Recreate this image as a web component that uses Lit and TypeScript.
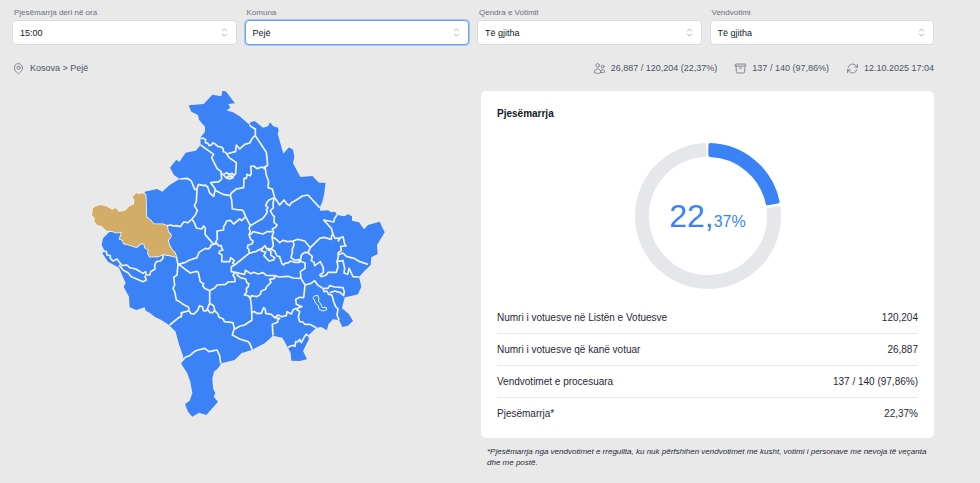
import { LitElement, html, css, svg } from "lit";
import { customElement, property } from "lit/decorators.js";

const ICONS: Record<string, string[]> = {
  pin: [
    "M15 10.5a3 3 0 11-6 0 3 3 0 016 0z",
    "M19.5 10.5c0 7.142-7.5 11.25-7.5 11.25S4.5 17.642 4.5 10.5a7.5 7.5 0 1115 0z",
  ],
  users: [
    "M15 19.128a9.38 9.38 0 002.625.372 9.337 9.337 0 004.121-.952 4.125 4.125 0 00-7.533-2.493M15 19.128v-.003c0-1.113-.285-2.16-.786-3.07M15 19.128v.106A12.318 12.318 0 018.624 21c-2.331 0-4.512-.645-6.374-1.766l-.001-.109a6.375 6.375 0 0111.964-3.07M12 6.375a3.375 3.375 0 11-6.75 0 3.375 3.375 0 016.75 0zm8.25 2.25a2.625 2.625 0 11-5.25 0 2.625 2.625 0 015.25 0z",
  ],
  archive: [
    "M20.25 7.5l-.625 10.632a2.25 2.25 0 01-2.247 2.118H6.622a2.25 2.25 0 01-2.247-2.118L3.75 7.5M10 11.25h4M3.375 7.5h17.25c.621 0 1.125-.504 1.125-1.125v-1.5c0-.621-.504-1.125-1.125-1.125H3.375c-.621 0-1.125.504-1.125 1.125v1.5c0 .621.504 1.125 1.125 1.125z",
  ],
  refresh: [
    "M16.023 9.348h4.992v-.001M2.985 19.644v-4.992m0 0h4.992m-4.993 0l3.181 3.183a8.25 8.25 0 0013.803-3.7M4.031 9.865a8.25 8.25 0 0113.803-3.7l3.181 3.182m0-4.991v4.99",
  ],
  sort: ["M8.25 15L12 18.75 15.75 15m-7.5-6L12 5.25 15.75 9"],
};

@customElement("ui-icon")
export class UiIcon extends LitElement {
  @property() name = "pin";
  static styles = css`
    :host { display: block; width: 13px; height: 13px; flex: none; }
    svg { display: block; width: 100%; height: 100%; fill: none; stroke: currentColor;
      stroke-width: 1.5; stroke-linecap: round; stroke-linejoin: round; }
  `;
  render() {
    return html`<svg viewBox="0 0 24 24" aria-hidden="true">
      ${ICONS[this.name].map((d) => svg`<path d=${d}></path>`)}
    </svg>`;
  }
}

const COUNTRY =
  "M327 61 372 57 398 29 425 34 428 18 438 19 466 55 446 57 452 68 440 76 460 82 480 94 510 120 512 112 525 108 550 128 565 124 571 112 580 123 595 128 597 138 594 146 611 206 628 187 640 194 644 215 640 235 662 276 698 273 718 293 738 293 733 330 728 350 720 368 722 377 745 376 755 382 766 380 772 390 795 394 805 388 817 394 817 407 838 412 853 433 865 420 900 410 915 442 892 480 894 507 875 517 873 540 855 557 838 576 845 605 835 628 815 633 795 637 787 670 808 688 820 708 805 722 788 726 778 705 760 703 746 718 742 736 725 726 710 728 685 752 688 762 670 798 682 823 660 828 635 827 633 805 625 788 608 758 580 752 555 775 518 794 485 805 465 825 425 835 415 850 403 860 398 880 400 910 407 925 402 935 415 950 380 990 358 983 338 995 325 980 316 957 330 947 338 925 332 890 323 865 305 837 311 815 297 775 288 740 268 720 245 705 225 695 212 685 198 677 195 667 170 675 150 667 148 635 132 605 138 595 118 548 85 530 68 505 75 498 66 480 70 460 88 442 127 435 199 400 195 320 232 312 248 320 270 300 300 282 283 270 271 248 290 224 299 231 318 203 348 197 363 180 362 158 376 140 376 125 358 104 355 90 335 80Z";

const PEJA =
  "M80 437 66 424 52 420 44 409 45 399 37 390 40 370 48 364 62 360 80 364 98 374 108 369 118 380 135 378 150 364 163 358 164 344 158 335 170 324 178 327 190 325 198 330 200 396 212 406 222 418 250 418 262 423 265 440 274 450 272 458 265 465 268 480 277 495 286 504 290 516 270 511 252 508 236 514 210 515 205 505 207 495 196 488 194 477 184 475 170 487 150 480 132 475 129 465 120 462 127 440 110 443 96 438Z";

const BORDERS = [
  "362 160 372 160 378 164 377 173 385 175 388 182 395 180 400 173 410 180 414 184 425 186 430 190 431 200 437 202 442 208 450 204 468 200 468 196 470 180 480 192 495 178 510 174 516 163 525 152",
  "510 120 515 125 527 132 527 152 560 202 564 240 556 247",
  "363 180 402 208 396 218 412 250 424 260 426 282 418 290 393 293 407 312 402 334 390 324 384 306 376 300 372 302 356 298",
  "300 282 322 280 335 288 345 313 352 313 356 298",
  "442 208 448 218 470 233 468 265 462 272 458 265 450 267 456 275 445 274 440 279 432 270 426 264",
  "440 279 450 282 460 278 462 270 M434 267 442 263 448 270",
  "352 313 350 350 344 362 353 376 347 390 337 402 325 413 312 411 302 425 290 422 280 423 275 420 262 422",
  "407 316 418 322 430 328 452 332 456 345 458 372 490 376",
  "452 332 455 324 470 312 492 308 493 280 500 280 502 268 512 272 515 264 513 244 522 243 532 251 548 246 553 250 558 243",
  "556 247 560 270 567 290 565 308 578 312 585 338 590 345 600 360 613 345 622 357 630 362 634 354 650 345 668 333 685 330 720 368",
  "490 376 498 395 512 422 550 400 563 382 560 374 565 368 558 362 562 352 568 345 583 338",
  "583 342 580 355 581 369 572 377 580 392 584 394 583 412 592 420 588 427 578 432 582 441 577 455",
  "512 422 508 430 512 438 508 450 515 446 520 440 550 447 562 440 578 440",
  "498 395 486 407 480 402 462 417 452 406 441 408 437 417 432 425 432 435 412 438 413 462 405 478",
  "337 402 345 415 350 429 366 432 372 423 377 430 376 448 402 478",
  "402 478 394 480 392 487 385 492 377 490 358 502 352 518 330 525 315 533 295 538",
  "402 478 412 475 416 482 425 482 426 490 430 495 420 498 418 505 427 510 426 530 450 530 453 518 464 527 459 534 465 540 508 505 530 499 550 488 556 482 560 490 575 492 581 482 577 455",
  "508 450 513 463 520 468 517 477 505 480 503 489 508 494 508 505",
  "550 488 545 498 558 501 553 512 568 528 582 525 585 518 574 511 573 498 560 493",
  "577 455 590 463 600 473 610 466 623 470 640 468 643 480 638 492 638 502 634 518 644 525 658 524 660 532 646 532 632 528 627 533 616 535 612 540 606 535 600 515 592 513 585 498 574 492",
  "640 468 655 463 675 468 692 488 685 503 675 502 665 510 662 528 676 534 676 550 662 560 664 580 676 600",
  "692 488 720 460 733 457 755 463 756 452 760 448 755 430 732 405 762 411 765 400 772 390",
  "760 448 766 460 778 459 776 468 782 458 790 455 795 477 799 483 783 484 785 497 775 504 776 515 772 530 775 545 770 562 745 562 740 570 725 575 720 570 731 563 731 548 722 530 705 542 703 532 695 527 698 515 685 503",
  "775 510 790 504 800 514 823 520 840 530 865 538",
  "772 530 790 527 795 550 793 564 804 568 808 550 820 575 838 576",
  "464 540 455 545 455 560 467 562 480 565 495 568 497 556 507 562 513 566 522 562 535 567 550 563 560 571 585 572 598 576 625 574 640 579 664 580",
  "467 562 460 570 466 580 466 590 446 591 437 598 412 600 406 608 390 617 375 610 369 602 372 596 362 590 356 562 350 559 332 564 313 550 300 540 295 538",
  "470 568 482 578 498 582 502 594 508 596 505 606 500 610 501 620 494 630 505 632 512 640 515 632 532 635 542 628 545 618 558 613 560 606 574 592 570 583 585 580 585 572",
  "512 640 515 660 516 682 517 705 495 720 482 723 465 732",
  "516 682 525 680 530 685 545 685 552 668 557 673 558 685 575 688 585 698 595 690 607 695 620 692 622 680 635 687 640 675 648 670 653 675 656 668 667 665 650 658 648 643 660 637 672 638 676 602",
  "585 698 600 700 594 705 594 712 578 718 580 752",
  "653 675 660 680 656 696 660 710 670 711 675 718 690 718 710 728",
  "625 788 632 783 642 781 646 784 648 770 656 770 660 763 665 773 673 758 679 748 686 752",
  "676 600 694 595 705 587 714 600 730 610 733 620 741 618 747 628 757 630 762 650 768 665 775 672 772 690 778 705",
  "733 610 745 610 750 602 765 606 790 608 794 620 792 632 782 623 765 618 750 623",
  "390 617 390 655 380 678 371 677 369 666 360 662 354 676 343 687 334 686 328 677 318 680 307 683 305 695 298 697 270 720",
  "305 695 305 680 M328 677 327 667 310 658 300 650 290 645 285 620 280 610 285 600 282 577 292 570 295 538 290 516",
  "390 655 402 662 405 675 400 683 390 682 384 673 M405 677 415 687 418 697 430 701 434 710 460 713 464 730 458 750 480 762 505 770 510 775 518 794",
  "305 830 318 816 330 812 345 799 356 795 375 790 388 800 402 797 412 795 420 812 423 835",
  "250 508 250 520 242 528 230 530 225 540 226 552 213 560 210 570 200 570 198 560 190 565 182 560 168 552 150 548 142 540 128 542 118 530 112 522 100 528 92 520 92 512 82 510 80 500 72 498",
  "118 540 130 555 145 563 155 575 190 590 200 585 195 572",
].map((p) => "M" + p).join(" ");

const ENCLAVE =
  "M705 632 715 632 718 642 716 648 722 655 728 668 740 667 740 675 730 678 718 673 716 662 708 655 704 645 700 638Z";

@customElement("kosovo-map")
export class KosovoMap extends LitElement {
  static styles = css`
    :host { display: block; }
    svg { display: block; width: 100%; }
    .land { fill: #3b82f6; }
    .selected { fill: #d3ac67; }
    .edge { fill: none; stroke: #f1f4f8; stroke-width: 5; stroke-linejoin: round; }
    .thin { stroke-width: 3; }
  `;
  render() {
    return html`<svg viewBox="-2 18 960 990" role="img" aria-label="Kosova">
      <path class="land" d=${COUNTRY}></path>
      <path class="edge" d=${BORDERS}></path>
      <path class="edge thin" d=${ENCLAVE}></path>
      <path class="edge" d=${PEJA}></path>
      <path class="selected" d=${PEJA}></path>
    </svg>`;
  }
}

/** Ring segment between two angles (degrees clockwise from the top); the
    stroke of the same colour rounds its corners. */
function segment(from: number, to: number): string {
  const pad = 2;
  const outer = 73 - pad;
  const inner = 59 + pad;
  const at = (r: number, deg: number, side: number) => {
    const a = (deg * Math.PI) / 180 + (side * pad) / r;
    return `${(r * Math.sin(a)).toFixed(2)} ${(-r * Math.cos(a)).toFixed(2)}`;
  };
  const large = to - from > 180 ? 1 : 0;
  return `M${at(outer, from, 1)}A${outer} ${outer} 0 ${large} 1 ${at(outer, to, -1)}L${at(inner, to, -1)}A${inner} ${inner} 0 ${large} 0 ${at(inner, from, 1)}Z`;
}

@customElement("turnout-ring")
export class TurnoutRing extends LitElement {
  @property({ type: Number }) value = 0;
  static styles = css`
    :host { display: grid; width: 148px; height: 148px; place-items: center; color: #3b82f6; }
    svg, .value { grid-area: 1 / 1; }
    svg { width: 148px; height: 148px; stroke-width: 4; stroke-linejoin: round; }
    .done { fill: #3b82f6; stroke: #3b82f6; }
    .rest { fill: #e5e7eb; stroke: #e5e7eb; }
    .value { padding-top: 6px; font-size: 32px; line-height: 36px; }
    .fraction { font-size: 16px; }
  `;
  render() {
    const end = this.value * 3.6;
    const [whole, fraction] = this.value.toFixed(2).split(".");
    return html`<svg viewBox="-74 -74 148 148" aria-hidden="true">
        <path class="rest" d=${segment(end + 1.5, 358.7)}></path>
        <path class="done" d=${segment(0.3, end - 0.6)}></path>
      </svg>
      <div class="value">${whole},<span class="fraction">${fraction}%</span></div>`;
  }
}

@customElement("app-root")
export class AppRoot extends LitElement {
  private filters = [
    { id: "hour", label: "Pjesëmarrja deri në ora", value: "15:00" },
    { id: "town", label: "Komuna", value: "Pejë", active: true },
    { id: "centre", label: "Qendra e Votimit", value: "Të gjitha" },
    { id: "station", label: "Vendvotimi", value: "Të gjitha" },
  ];
  private stats = [
    { icon: "users", text: "26,887 / 120,204 (22,37%)" },
    { icon: "archive", text: "137 / 140 (97,86%)" },
    { icon: "refresh", text: "12.10.2025 17:04" },
  ];
  private rows = [
    ["Numri i votuesve në Listën e Votuesve", "120,204"],
    ["Numri i votuesve që kanë votuar", "26,887"],
    ["Vendvotimet e procesuara", "137 / 140 (97,86%)"],
    ["Pjesëmarrja*", "22,37%"],
  ];

  static styles = css`
    :host {
      display: block; box-sizing: border-box; min-height: 100vh;
      padding: 8px 46px 8px 12px; background: #e9e9e9; color: #1f2937;
      font-family: "Liberation Sans", Arial, sans-serif; font-size: 9px;
    }
    .filters { display: grid; grid-template-columns: repeat(4, 1fr); gap: 8px; }
    .field { display: flex; flex-direction: column; gap: 2px; min-width: 0; }
    .field label { padding-left: 2px; font-size: 8px; line-height: 10px; color: #6b7280; }
    .control { display: grid; align-items: center; }
    .control select, .control ui-icon { grid-area: 1 / 1; }
    .control ui-icon { justify-self: end; margin-right: 6px; color: #9ca3af; pointer-events: none; }
    select {
      appearance: none; box-sizing: border-box; width: 100%; height: 25px; margin: 0;
      padding: 0 20px 0 7px; border: 1px solid #d9dbdf; border-radius: 4px; background: #fff;
      color: #111827; font-family: inherit; font-size: 9px; outline: none;
    }
    select.active { border-color: #6b9ff0; box-shadow: 0 0 0 1px #a9c4ee; }
    .info { display: flex; justify-content: space-between; align-items: center; margin: 15px 0; color: #4b5563; line-height: 16px; }
    .crumbs, .stat { display: flex; align-items: center; gap: 5px; }
    .crumbs ui-icon, .stat ui-icon { color: #6b7280; }
    .stats { display: flex; gap: 17px; }
    .main { display: grid; grid-template-columns: 1fr 1fr; gap: 16px; align-items: start; }
    kosovo-map { width: 100%; max-width: 320px; justify-self: center; }
    .card { padding: 15px 16px 8px; border-radius: 5px; background: #fff; }
    h2 { margin: 0; font-size: 10px; line-height: 16px; color: #111827; }
    turnout-ring { margin: 20px auto 12px; }
    table { width: 100%; border-collapse: collapse; font-size: 10px; line-height: 16px; }
    th, td { padding: 8px 0 7px; border-bottom: 1px solid #e5e7eb; font-weight: 400; text-align: left; }
    td { text-align: right; }
    tr:last-child > * { border-bottom-color: transparent; }
    .note { margin: 8px 6px 0; font-size: 8px; line-height: 11px; font-style: italic; }
  `;

  render() {
    return html`
      <div class="filters">
        ${this.filters.map(
          (f) => html`<div class="field">
            <label for=${f.id}>${f.label}</label>
            <div class="control">
              <select id=${f.id} class=${f.active ? "active" : ""}><option>${f.value}</option></select>
              <ui-icon name="sort"></ui-icon>
            </div>
          </div>`
        )}
      </div>
      <div class="info">
        <div class="crumbs"><ui-icon name="pin"></ui-icon><span>Kosova &gt; Pejë</span></div>
        <div class="stats">
          ${this.stats.map((s) => html`<div class="stat"><ui-icon name=${s.icon}></ui-icon><span>${s.text}</span></div>`)}
        </div>
      </div>
      <main class="main">
        <kosovo-map></kosovo-map>
        <div>
          <section class="card">
            <h2>Pjesëmarrja</h2>
            <turnout-ring .value=${22.37}></turnout-ring>
            <table>
              <tbody>
                ${this.rows.map(([name, value]) => html`<tr><th scope="row">${name}</th><td>${value}</td></tr>`)}
              </tbody>
            </table>
          </section>
          <p class="note">*Pjesëmarrja nga vendvotimet e rregullta, ku nuk përfshihen vendvotimet me kusht, votimi i personave me nevoja të veçanta dhe me postë.</p>
        </div>
      </main>
    `;
  }
}
